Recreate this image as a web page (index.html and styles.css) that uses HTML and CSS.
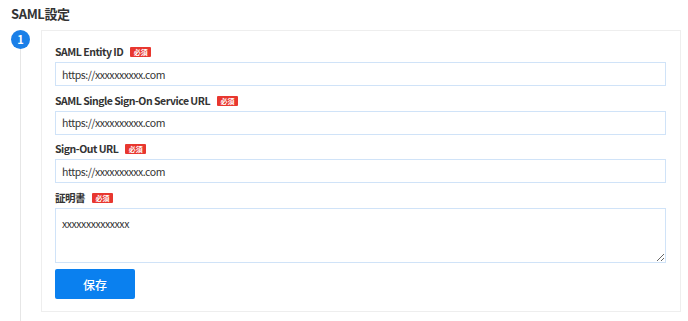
FILE: index.html
```html
<!DOCTYPE html>
<html lang="ja">
<head>
<meta charset="UTF-8" />
<meta name="viewport" content="width=device-width, initial-scale=1" />
<title>SAML設定</title>
<link rel="stylesheet" href="styles.css">
</head>
<body>

<main class="page">
  <h2 class="page-title">SAML設定</h2>

  <section class="step">
    <div class="rail">
      <div class="step-num">1</div>
      <div class="rail-line"></div>
    </div>

    <form class="card" onsubmit="return false">
      <div class="field">
        <label class="field-label" for="entityId">SAML Entity ID <span class="req">必須</span></label>
        <input type="text" id="entityId" value="https://xxxxxxxxxx.com" />
      </div>
      <div class="field">
        <label class="field-label" for="ssoUrl">SAML Single Sign-On Service URL <span class="req">必須</span></label>
        <input type="text" id="ssoUrl" value="https://xxxxxxxxxx.com" />
      </div>
      <div class="field">
        <label class="field-label" for="signOutUrl">Sign-Out URL <span class="req">必須</span></label>
        <input type="text" id="signOutUrl" value="https://xxxxxxxxxx.com" />
      </div>
      <div class="field">
        <label class="field-label" for="cert">証明書 <span class="req">必須</span></label>
        <textarea id="cert">xxxxxxxxxxxxxx</textarea>
      </div>
      <button type="submit" class="save-btn">保存</button>
    </form>
  </section>
</main>

</body>
</html>
```

FILE: styles.css
```css
body { margin: 0; background: #fff; color: #333; font-family: "Noto Sans CJK JP", "Noto Sans", sans-serif; }
.page { padding: 4px 7px 0 11px; }
.page-title { margin: 0 0 6px; font-size: 13px; line-height: 20px; font-weight: 700; letter-spacing: -0.4px; color: #333; }

.step { display: flex; margin-left: -11px; padding-bottom: 9px; }
.rail { width: 41px; flex-shrink: 0; display: flex; flex-direction: column; }
.step-num { width: 19px; height: 19px; margin-left: 11px; border-radius: 50%; background: #1a7fe8; color: #fff; font-size: 11px; font-weight: 700; line-height: 19px; text-align: center; }
.rail-line { width: 1px; margin-left: 20px; flex: 1; background: #e6e6e6; margin-bottom: -9px; }

.card { flex: 1; background: #fff; border: 1px solid #eeeeee; padding: 13px 14px 12px 13px; }
.field { margin-bottom: 6.5px; }
.field-label { display: flex; align-items: center; margin-bottom: 2px; font-size: 10.5px; line-height: 16px; font-weight: 700; letter-spacing: -0.5px; color: #333; }
.req { display: inline-block; margin-left: 7px; padding: 0 3.5px; height: 10px; line-height: 10px; background: #e8372f; color: #fff; font-size: 7px; font-weight: 700; letter-spacing: 0; border-radius: 1px; }

input[type="text"], textarea { display: block; width: 100%; box-sizing: border-box; border: 1.5px solid #d0e3f8; border-radius: 0; font-family: inherit; font-size: 10.5px; letter-spacing: -0.45px; color: #333; background: #fff; }
input[type="text"] { height: 24px; padding: 0 6px; }
textarea { height: 55px; padding: 7px 6px; line-height: 16px; resize: vertical; }
input[type="text"]:focus, textarea:focus { outline: none; border-color: #8cbff2; }

.save-btn { display: block; width: 80px; height: 30px; border: none; border-radius: 2px; background: #0a80ef; color: #fff; font-family: inherit; font-size: 12px; font-weight: 500; cursor: pointer; }
.save-btn:hover { background: #0a6fd0; }
```
